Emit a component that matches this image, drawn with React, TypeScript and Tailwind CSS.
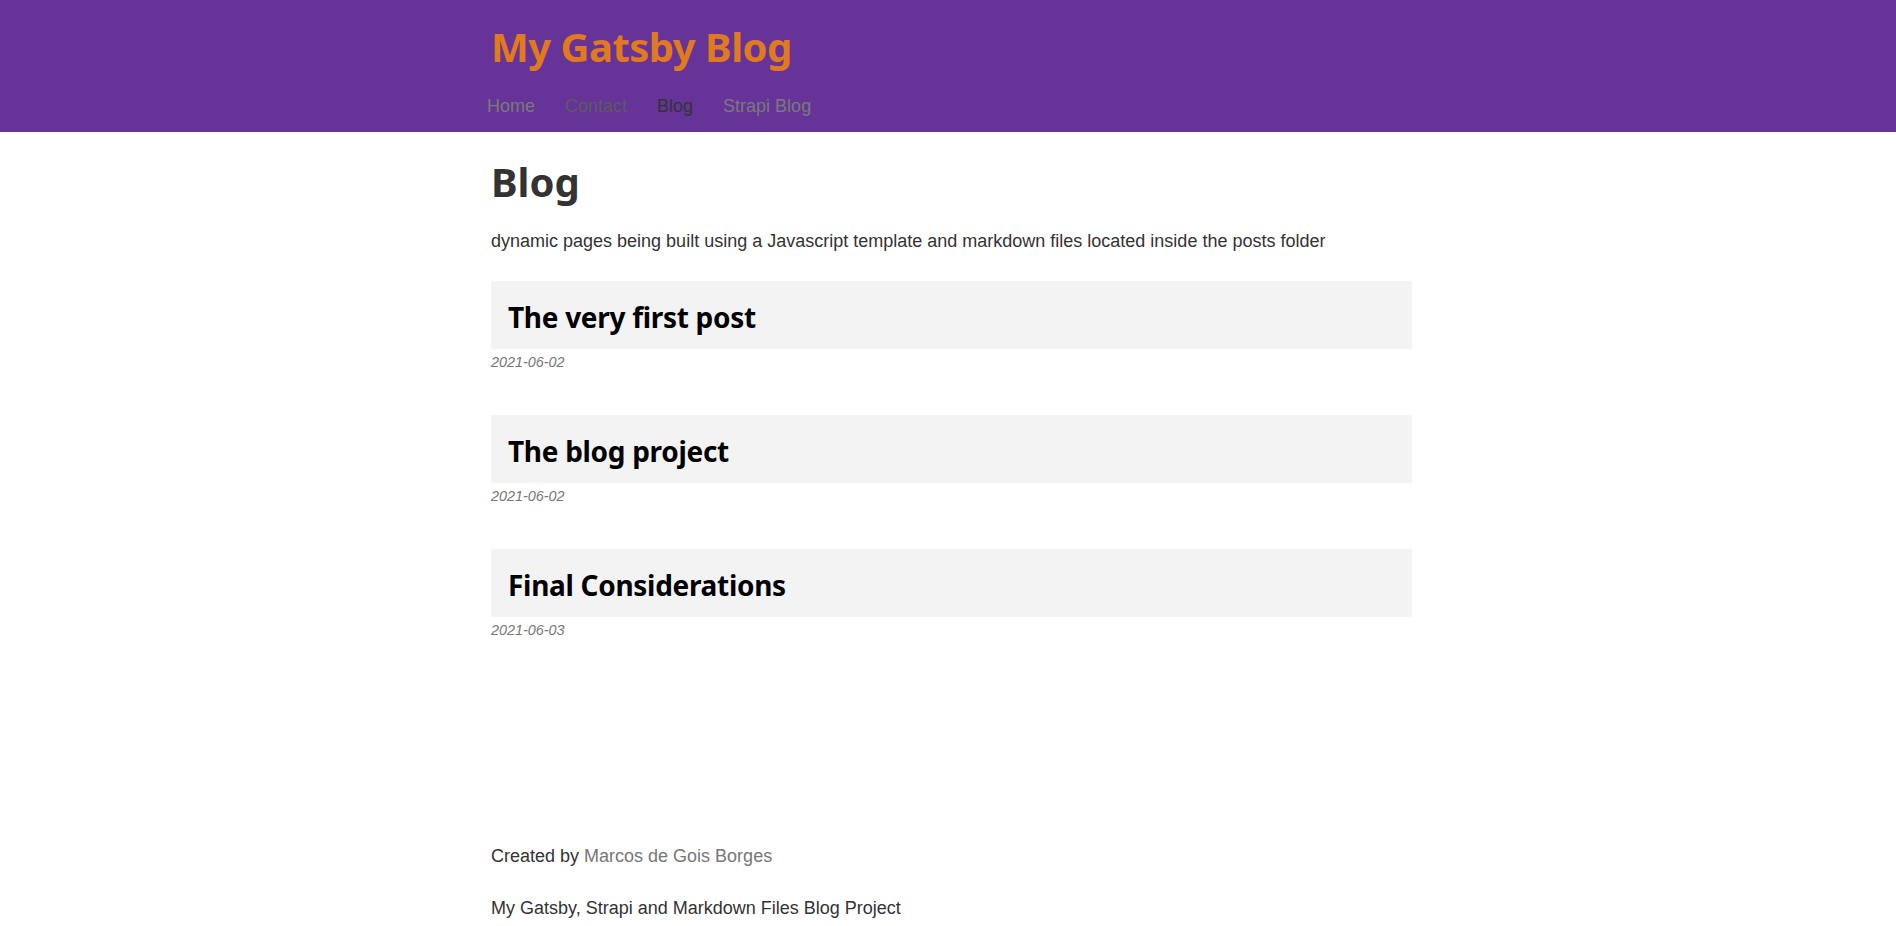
import React from "react";

const posts = [
  { title: "The very first post", date: "2021-06-02" },
  { title: "The blog project", date: "2021-06-02" },
  { title: "Final Considerations", date: "2021-06-03" },
];

const heading = { fontFamily: '"Noto Sans", "Open Sans", sans-serif' };

export default function App() {
  return (
    <div className="min-h-[926px] bg-white text-[#333]" style={{ fontFamily: '"Liberation Sans", Arial, sans-serif' }}>
      <header className="bg-[#663399]">
        <div className="w-[960px] mx-auto pl-[19px] pb-[14px]">
          <div className="pt-[23px] pl-[4px]">
            <h1 className="text-[40px] leading-[48px] font-bold text-[#e07a1c] tracking-[-0.5px]" style={heading}>
              My Gatsby Blog
            </h1>
          </div>
          <nav className="mt-[23px] flex gap-[30px] text-[18px] leading-[24px]">
            <a className="text-[#7a7a7a]">Home</a>
            <a className="text-[#5c5c5c]">Contact</a>
            <a className="text-[#333]">Blog</a>
            <a className="text-[#7a7a7a]">Strapi Blog</a>
          </nav>
        </div>
      </header>
      <main className="w-[960px] mx-auto pl-[23px] pr-[16px]">
        <h1 className="mt-[26px] text-[40px] leading-[48px] font-bold text-[#333]" style={heading}>
          Blog
        </h1>
        <p className="mt-[22px] text-[18px] leading-[27px]">
          dynamic pages being built using a Javascript template and markdown files located inside the posts folder
        </p>
        <div className="mt-[26px] flex flex-col gap-[43px]">
          {posts.map((p) => (
            <div key={p.title}>
              <div className="bg-[#f3f3f3] h-[68px] pt-[20px] pb-[16px] pl-[17px]">
                <h2 className="text-[28px] leading-[32px] font-bold text-black tracking-[-0.3px]" style={heading}>
                  {p.title}
                </h2>
              </div>
              <div className="mt-[3px] text-[14.4px] leading-[20px] italic text-[#777]">{p.date}</div>
            </div>
          ))}
        </div>
        <footer className="mt-[203px] pb-[6px]">
          <p className="text-[18px] leading-[27px]">
            Created by <a className="text-[#777]">Marcos de Gois Borges</a>
          </p>
          <p className="mt-[25px] text-[18px] leading-[27px]">My Gatsby, Strapi and Markdown Files Blog Project</p>
        </footer>
      </main>
    </div>
  );
}
